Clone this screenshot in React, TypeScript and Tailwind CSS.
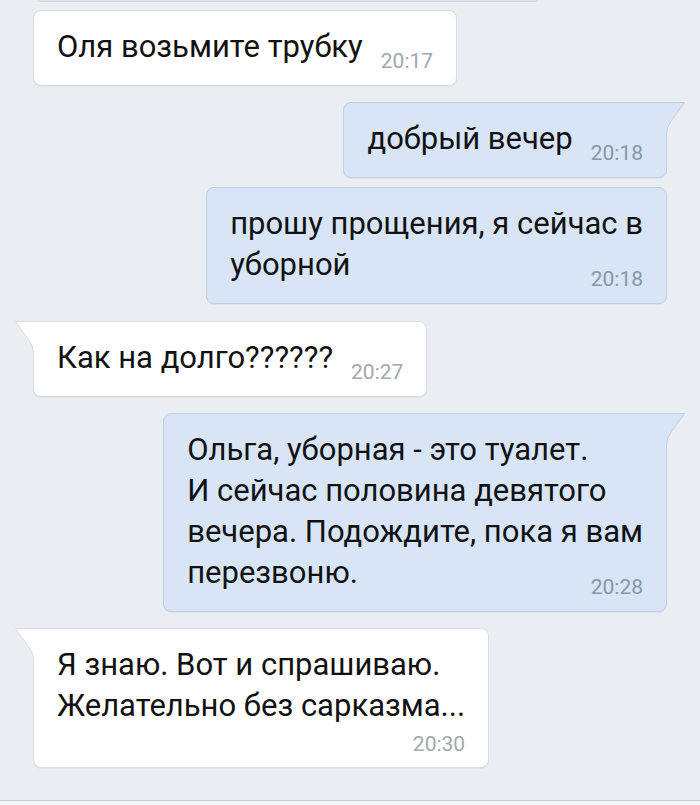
import React from "react";

type Msg = {
  lines: string[];
  time: string;
  out?: boolean;
  tail?: boolean;
  timeBelow?: boolean;
  mt: string;
};

const msgs: Msg[] = [
  { lines: ["Оля возьмите трубку"], time: "20:17", mt: "mt-[8px]" },
  { lines: ["добрый вечер"], time: "20:18", out: true, tail: true, mt: "mt-[16px]" },
  { lines: ["прошу прощения, я сейчас в", "уборной"], time: "20:18", out: true, mt: "mt-[9px]" },
  { lines: ["Как на долго??????"], time: "20:27", tail: true, mt: "mt-[17px]" },
  {
    lines: ["Ольга, уборная - это туалет.", "И сейчас половина девятого", "вечера. Подождите, пока я вам", "перезвоню."],
    time: "20:28",
    out: true,
    tail: true,
    mt: "mt-[16px]",
  },
  {
    lines: ["Я знаю. Вот и спрашиваю.", "Желательно без сарказма..."],
    time: "20:30",
    tail: true,
    timeBelow: true,
    mt: "mt-[16px]",
  },
];

function Tail({ out }: { out?: boolean }) {
  const fill = out ? "#d7e5f6" : "#ffffff";
  const stroke = out ? "#bfd0e4" : "#d8dde4";
  return (
    <svg
      width="20"
      height="32"
      viewBox="0 0 20 32"
      className={`absolute -top-[1px] ${out ? "-right-[19px]" : "-left-[19px]"}`}
    >
      <g transform={out ? "translate(20,0) scale(-1,1)" : undefined}>
        <path d="M0.5 0.5 L13.5 18.5 Q18.5 24.5 18.5 32 L20 32 L20 0 L0.5 0 Z" fill={fill} />
        <path d="M20 0.5 H0.5 L13.5 18.5 Q18.5 24.5 18.5 32" fill="none" stroke={stroke} strokeWidth="1" />
      </g>
    </svg>
  );
}

function Bubble({ m }: { m: Msg }) {
  const base = m.out
    ? "bg-[#d7e5f6] border-[#bfd0e4]"
    : "bg-white border-[#d8dde4]";
  const corner = m.tail ? (m.out ? "rounded-tr-none" : "rounded-tl-none") : "";
  const timeColor = m.out ? "text-[#8797a8]" : "text-[#a2a8af]";
  return (
    <div
      className={`relative w-fit flow-root border rounded-[8px] ${corner} ${base} px-[23px] pt-[15px] ${
        m.timeBelow ? "pb-[11px]" : "pb-[18px]"
      } shadow-[0_1px_0_rgba(0,0,0,0.04)]`}
    >
      {m.tail && <Tail out={m.out} />}
      <div className="text-[31px] leading-[41px] text-[#111111] whitespace-nowrap">
        {m.lines.map((l, i) => (
          <React.Fragment key={i}>
            {l}
            {i < m.lines.length - 1 && <br />}
          </React.Fragment>
        ))}
        {!m.timeBelow && (
          <span className={`float-right relative top-[23px] ml-[18px] text-[21px] leading-[24px] ${timeColor}`}>
            {m.time}
          </span>
        )}
      </div>
      {m.timeBelow && (
        <div className={`text-right mt-[6px] text-[21px] leading-[24px] ${timeColor}`}>{m.time}</div>
      )}
    </div>
  );
}

export default function App() {
  return (
    <div
      className="w-[700px] h-[805px] bg-[#eaeef3] flex flex-col overflow-hidden"
      style={{ fontFamily: "Roboto, 'Noto Sans', sans-serif" }}
    >
      <div className="ml-[37px] w-[501px] h-[2px] bg-[#dde2e8] border-b border-[#d3d9e0] rounded-b-[2px]" />
      {msgs.map((m, i) => (
        <div
          key={i}
          className={`flex ${m.out ? "justify-end pr-[33px]" : "justify-start pl-[33px]"} ${m.mt}`}
        >
          <Bubble m={m} />
        </div>
      ))}
      <div className="flex-1" />
      <div className="h-[1px] bg-[#c8cdd3]" />
      <div className="h-[4px] bg-[#f5f6f7]" />
    </div>
  );
}
